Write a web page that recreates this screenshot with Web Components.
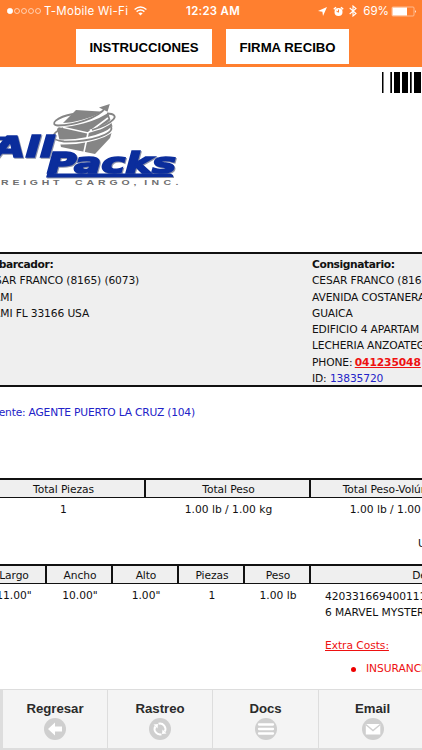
<!DOCTYPE html>
<html lang="es">
<head>
<meta charset="utf-8">
<title>All Packs - Recibo</title>
<style>
  html, body { margin: 0; height: 100%; overflow: hidden; background: #fff; }
</style>
</head>
<body>
<receipt-app></receipt-app>

<script>
/* Attach an open shadow root filled from a markup string. */
class BaseElement extends HTMLElement {
  connectedCallback() {
    if (this.shadowRoot) return;
    const tpl = document.createElement("template");
    tpl.innerHTML = this.markup();
    this.attachShadow({ mode: "open" }).appendChild(tpl.content.cloneNode(true));
  }
}

/* ── <status-bar> ─────────────────────────────────────── */
customElements.define("status-bar", class extends BaseElement {
  markup() {
    return `
      <style>
        :host {
          display: grid; grid-template-columns: 1fr auto 1fr; align-items: center;
          height: 22px; padding: 0 5px 0 7px; color: #fff;
          font: 11.6px/22px Inter, "Liberation Sans", sans-serif;
        }
        div { display: flex; align-items: center; white-space: nowrap; }
        .right { justify-content: flex-end; }
        .time { font-weight: 600; font-size: 11.4px; letter-spacing: .3px; margin-left: 2px; }
        .carrier { margin: 0 6px 0 2px; letter-spacing: .25px; font-size: 11.5px; }
        .pct { margin: 0 2px 0 6px; }
        svg { flex: none; }
      </style>
      <div>
        <svg width="35" height="8" fill="none" stroke="#fff" stroke-width=".6">
          <circle cx="3" cy="4" r="2.7" fill="#fff"/><circle cx="10" cy="4" r="2.5"/>
          <circle cx="17" cy="4" r="2.5"/><circle cx="24" cy="4" r="2.5"/><circle cx="31" cy="4" r="2.5"/>
        </svg>
        <span class="carrier">T-Mobile Wi-Fi</span>
        <svg width="13" height="10" viewBox="0 0 13 10" fill="none" stroke="#fff" stroke-width="1.4">
          <path d="M.6 3.5Q6.500-1.500 12.400 3.500M2.600 5.600Q6.500 2.300 10.400 5.600"/>
          <path d="M4.300 7.300Q6.500 5.500 8.700 7.300L6.500 9.600z" fill="#fff" stroke="none"/>
        </svg>
      </div>
      <span class="time">12:23 AM</span>
      <div class="right">
        <svg width="9" height="9" viewBox="0 0 9 9"><path d="M9 0L5 9L4.400 4.700L0 4.100z" fill="#fff"/></svg>
        <svg width="11" height="11" viewBox="0 0 11 11" style="margin-left:6px">
          <circle cx="5.500" cy="6" r="4" fill="#fff"/>
          <path d="M.8 3.200L3 1.200M10.200 3.200L8 1.200" stroke="#fff" stroke-width="1.500"/>
          <path d="M5.500 3.500V6.200L3.500 5.200" fill="none" stroke="#ff7f2f"/>
        </svg>
        <svg width="8" height="12" viewBox="0 0 8 12" style="margin-left:5px" fill="none" stroke="#fff" stroke-width="1.100">
          <path d="M.7 3L7 8.500L4 11V1L7 3.500L.7 9"/>
        </svg>
        <span class="pct">69%</span>
        <svg width="26" height="11" viewBox="0 0 26 11">
          <rect x="1" y="1" width="22" height="9" rx="1" fill="none" stroke="#ffc9a5" stroke-width=".8"/>
          <rect x="1.500" y="1.500" width="14.500" height="8" fill="#fff"/>
          <path d="M24.200 4Q26 5.500 24.200 7z" fill="#fff"/>
        </svg>
      </div>`;
  }
});

/* ── <action-button> ──────────────────────────────────── */
customElements.define("action-button", class extends BaseElement {
  markup() {
    return `
      <style>
        :host { display: block; }
        button {
          width: 100%; height: 35px; padding: 2px 0 0; border: 0; background: #fff; color: #000;
          font: bold 13.2px "Liberation Sans", Arial, sans-serif; white-space: nowrap;
        }
      </style>
      <button><slot></slot></button>`;
  }
});

/* ── <company-logo> ───────────────────────────────────── */
customElements.define("company-logo", class extends BaseElement {
  markup() {
    return `
      <style>
        :host { display: block; height: 100px; }
        svg { display: block; }
        .blue { fill: #0b2d9c; filter: drop-shadow(1.500px 1.500px .6px #8d93a8); }
        .name { font: italic bold 28px "DejaVu Sans", sans-serif; stroke: #0b2d9c; stroke-width: 1.600px; }
        .tag { font: bold 7.500px "Liberation Sans", sans-serif; fill: #6f6f6f; }
      </style>
      <svg width="190" height="100" viewBox="0 95 190 100">
        <path d="M76 110L108 112L113 128L110 138L95 154L61 147L57 129L64 122z" fill="#858585"/>
        <g fill="none" stroke="#fff" stroke-width="1.600">
          <path d="M57 126L88 133L108 118M88 133L84 152"/>
        </g>
        <g fill="none" stroke="#fff">
          <path d="M55 124.500C70 127 98 119 110 109" stroke-width="4"/>
          <path d="M52 141.500C75 144 104 138 114 128" stroke-width="5"/>
          <path d="M114 119C106 127 98 129 90 131" stroke-width="3"/>
        </g>
        <g fill="none" stroke="#858585" stroke-width="1.800">
          <path d="M73 114C56 117 49 125 58 125.500C73 125 98 119 106 107"/>
          <path d="M107 113.500C122 114 114 123 92 130"/>
          <path d="M63 128C50 134 50 140 64 141.500C90 142 115 134 111 127"/>
        </g>
        <path d="M109.800 104L99 107.500L107.500 111.800z" fill="#858585"/>
        <g class="blue">
          <path d="M-2 136.500H14L11 140H-2zM57 154H75L71 158H60Q57 158 57 154zM46 177.500L48 171H55L54 173.500H168Q174 173.500 173 177z"/>
          <text class="name" x="-7" y="157" textLength="61" lengthAdjust="spacingAndGlyphs">All</text>
          <text class="name" x="47" y="173" textLength="129" lengthAdjust="spacingAndGlyphs">Packs</text>
        </g>
        <g class="tag" transform="scale(1.4 1)">
          <text x="-6.500" y="185" textLength="49" >FREIGHT</text>
          <text x="53.500" y="185" textLength="44">CARGO,</text>
          <text x="103" y="185" textLength="24.500">INC.</text>
        </g>
      </svg>`;
  }
});

/* ── <bar-code> ───────────────────────────────────────── */
customElements.define("bar-code", class extends BaseElement {
  markup() {
    return `
      <style>
        :host { display: block; }
        svg { display: block; }
      </style>
      <svg width="60" height="21" fill="#000">
        <path d="M0 0h1.500v21H0zM8.300 0h1.700v21H8.300zM12 0h6v21h-6zM20 0h6v21h-6zM28 0h1.700v21H28zM32 0h7v21h-7z"/>
      </svg>`;
  }
});

/* ── <party-block label="…"> address lines ────────────── */
customElements.define("party-block", class extends BaseElement {
  markup() {
    return `
      <style>
        :host { display: block; white-space: nowrap; letter-spacing: -.13px; }
        b { display: block; letter-spacing: -.4px; }
        ::slotted(div) { display: block; }
      </style>
      <b>${this.getAttribute("label")}</b>
      <slot></slot>`;
  }
});

/* ── <data-table cols="…"> header cells and one row ───── */
customElements.define("data-table", class extends BaseElement {
  markup() {
    const heads = this.getAttribute("heads").split("|");
    return `
      <style>
        :host { display: block; }
        .row { display: grid; grid-template-columns: ${this.getAttribute("cols")}; text-align: center; white-space: nowrap; }
        .head { box-sizing: border-box; height: 20px; background: #efefef; border: solid #111; border-width: 2px 0 1px; }
        .head span { height: 17px; border-right: 2px solid #111; line-height: 20px; padding-left: 2px; letter-spacing: -.08px; }
        .cells { line-height: 16.300px; padding-top: 4px; }
      </style>
      <div class="row head">${heads.map((h) => `<span>${h}</span>`).join("")}</div>
      <div class="row cells"><slot></slot></div>`;
  }
});

/* ── <receipt-page> the scrolled, zoomed document ─────── */
customElements.define("receipt-page", class extends BaseElement {
  markup() {
    return `
      <style>
        :host {
          display: block; overflow: hidden; background: #fff; color: #111;
          font: 10.700px/16.300px Verdana, "DejaVu Sans", sans-serif;
        }
        .page { width: 660px; margin-left: -19px; }
        .top { display: flex; height: 185px; }
        company-logo { margin: 28px 0 0 19px; width: 190px; }
        bar-code { margin: 5px 0 0 192px; }
        .parties {
          box-sizing: border-box; height: 135px; display: grid; grid-template-columns: 331px 1fr;
          background: #efefef; border: solid #111; border-width: 2px 0; padding-top: 3px;
        }
        .link { color: #e11; text-decoration: underline; letter-spacing: -.1px; margin-left: -1px; }
        .blue { color: #2222c8; }
        .agent { margin: 18px 0 57px; padding-left: 4px; white-space: nowrap; letter-spacing: -.2px; }
        .ulin { margin: 17px 0 12px 437px; white-space: nowrap; }
        .desc { text-align: left; padding: 1px 0 0 14px; letter-spacing: -.05px; }
        .costs { color: #e11; margin-top: 16.300px; }
        ul { color: #e11; margin: 7px 0 0; padding: 0 0 0 41px; list-style: none; }
        li { display: flex; align-items: center; }
        li::before { content: ""; width: 5px; height: 5px; border-radius: 50%; background: #e00; margin: 0 10px 0 -15px; }
      </style>
      <div class="page">
        <div class="top"><company-logo></company-logo><bar-code></bar-code></div>
        <div class="parties">
          <party-block label="Embarcador:">
            <div>CESAR FRANCO (8165) (6073)</div><div>MIAMI</div><div>MIAMI FL 33166 USA</div>
          </party-block>
          <party-block label="Consignatario:">
            <div>CESAR FRANCO (8165)</div><div>AVENIDA COSTANERA</div><div>GUAICA</div>
            <div>EDIFICIO 4 APARTAM</div><div>LECHERIA ANZOATEG</div>
            <div>PHONE: <b class="link">041235048</b></div>
            <div>ID: <span class="blue">13835720</span></div>
          </party-block>
        </div>
        <div class="agent blue">Agente: AGENTE PUERTO LA CRUZ (104)</div>
        <data-table cols="repeat(4, 165px)" heads="Total Piezas|Total Peso|Total Peso-Volúmen|">
          <span>1</span><span>1.00 lb / 1.00 kg</span><span>1.00 lb / 1.00 kg</span>
        </data-table>
        <div class="ulin">U</div>
        <data-table cols="repeat(5, 66px) 264px" heads="Largo|Ancho|Alto|Piezas|Peso|Descripción">
          <span>11.00"</span><span>10.00"</span><span>1.00"</span><span>1</span><span>1.00 lb</span>
          <div class="desc">
            <div>420331669400111</div><div>6 MARVEL MYSTER</div>
            <div class="costs"><u>Extra Costs:</u></div>
            <ul><li>INSURANCE</li></ul>
          </div>
        </data-table>
      </div>`;
  }
});

/* ── <tab-item label="…" icon="…"> ────────────────────── */
customElements.define("tab-item", class extends BaseElement {
  markup() {
    return `
      <style>
        :host {
          display: flex; flex-direction: column; align-items: center; box-sizing: border-box;
          padding-top: 10px; border-left: 1px solid #ddd; color: #2b2b2b;
          font: bold 13.200px/17px "Liberation Sans", Arial, sans-serif;
        }
        svg { display: block; }
      </style>
      <span>${this.getAttribute("label")}</span>
      <svg width="24" height="24" viewBox="0 0 24 24">
        <circle cx="12" cy="12" r="11" fill="#cfcfcf"/>
        ${this.icon()}
      </svg>`;
  }
  icon() {
    return {
      back: '<path d="M5 12L12 5.500V9.500H19V14.500H12V18.500z" fill="#fff"/>',
      sync: '<g fill="none" stroke="#fff" stroke-width="2"><path d="M10.500 6.700A5.500 5.500 0 0 1 16.800 14.500M13.500 17.300A5.500 5.500 0 0 1 7.200 9.500"/></g><path d="M5.500 7.500L10 7L9.500 11.500zM18.500 16.500L14 17L14.500 12.500z" fill="#fff"/>',
      list: '<path d="M5 7.500H19M5 12H19M5 16.500H19" stroke="#fff" stroke-width="2.300" stroke-linecap="round"/>',
      mail: '<rect x="4.800" y="7" width="14.500" height="10.500" fill="#fff"/><path d="M4.800 7.500L12 13.500L19.300 7.500" fill="none" stroke="#cfcfcf" stroke-width="1.400"/>',
    }[this.getAttribute("icon")];
  }
});

/* ── <receipt-app> ────────────────────────────────────── */
customElements.define("receipt-app", class extends BaseElement {
  markup() {
    return `
      <style>
        :host { display: grid; grid-template-rows: 67px 1fr 61px; width: 422px; height: 750px; overflow: hidden; }
        header { background: #ff7f2f; }
        .actions { display: grid; grid-template-columns: 136px 123px; gap: 14px; padding: 7px 0 0 76px; }
        receipt-page { min-height: 0; min-width: 0; }
        nav {
          box-sizing: border-box; display: grid; grid-template-columns: 105px 105px 106px 108px;
          padding-left: 2px; background: #f4f4f4; border: solid #ddd; border-width: 1px 0 2px;
          box-shadow: inset 2px 0 #ddd; overflow: hidden;
        }
      </style>
      <header>
        <status-bar></status-bar>
        <div class="actions">
          <action-button>INSTRUCCIONES</action-button>
          <action-button>FIRMA RECIBO</action-button>
        </div>
      </header>
      <receipt-page></receipt-page>
      <nav>
        <tab-item label="Regresar" icon="back"></tab-item>
        <tab-item label="Rastreo" icon="sync"></tab-item>
        <tab-item label="Docs" icon="list"></tab-item>
        <tab-item label="Email" icon="mail"></tab-item>
      </nav>`;
  }
});
</script>
</body>
</html>
